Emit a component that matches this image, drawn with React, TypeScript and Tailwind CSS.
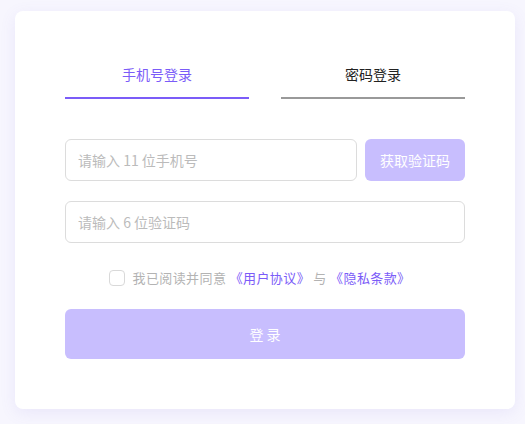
import { useState } from "react";

export default function App() {
  const [tab, setTab] = useState<"sms" | "password">("sms");
  const [phone, setPhone] = useState("");
  const [code, setCode] = useState("");
  const [agree, setAgree] = useState(false);

  return (
    <div
      className="min-h-screen bg-[#f7f6fe] pl-[15px] pt-[11px]"
      style={{ fontFamily: '"Noto Sans CJK SC", "Noto Sans", sans-serif' }}
    >
      <div className="w-[500px] rounded-lg bg-white px-[50px] pb-[50px] pt-[53px] shadow-[0_4px_16px_rgba(120,100,220,0.10)]">
        {/* TABS */}
        <div className="flex gap-8">
          <button
            type="button"
            onClick={() => setTab("sms")}
            className={`flex-1 border-b-2 pb-[13px] text-sm leading-5 ${
              tab === "sms"
                ? "border-[#7b5cf8] text-[#7b5cf8]"
                : "border-[#999999] text-[#222222]"
            }`}
          >
            手机号登录
          </button>
          <button
            type="button"
            onClick={() => setTab("password")}
            className={`flex-1 border-b-2 pb-[13px] text-sm leading-5 ${
              tab === "password"
                ? "border-[#7b5cf8] text-[#7b5cf8]"
                : "border-[#999999] text-[#222222]"
            }`}
          >
            密码登录
          </button>
        </div>

        {/* PHONE */}
        <div className="mt-10 flex gap-2">
          <input
            value={phone}
            onChange={(e) => setPhone(e.target.value)}
            placeholder="请输入 11 位手机号"
            className="h-[42px] min-w-0 flex-1 rounded-md border border-[#dcdcdc] px-3 text-sm text-[#333] outline-none placeholder:text-[#bbbbbb]"
          />
          <button
            type="button"
            className="h-[42px] w-[100px] rounded-md bg-[#c8befe] text-sm text-white"
          >
            获取验证码
          </button>
        </div>

        {/* CODE */}
        <input
          value={code}
          onChange={(e) => setCode(e.target.value)}
          placeholder="请输入 6 位验证码"
          className="mt-5 block h-[42px] w-full rounded-md border border-[#dcdcdc] px-3 text-sm text-[#333] outline-none placeholder:text-[#bbbbbb]"
        />

        {/* AGREEMENT */}
        <label className="mt-[25px] flex h-5 items-center justify-center gap-[8px] pr-[11px] text-[13px] tracking-[0.4px] text-[#b3b3b3]">
          <input
            type="checkbox"
            checked={agree}
            onChange={(e) => setAgree(e.target.checked)}
            className="h-4 w-4 appearance-none rounded-[4px] border border-[#d9d9d9] bg-white"
          />
          <span className="whitespace-pre">
            我已阅读并同意 <span className="text-[#7b5cf8]">《用户协议》</span> 与{" "}
            <span className="text-[#7b5cf8]">《隐私条款》</span>
          </span>
        </label>

        {/* CTA */}
        <button
          type="button"
          className="mt-[21px] h-[50px] w-full rounded-md bg-[#c8befe] text-sm text-white"
        >
          登 录
        </button>
      </div>
    </div>
  );
}
